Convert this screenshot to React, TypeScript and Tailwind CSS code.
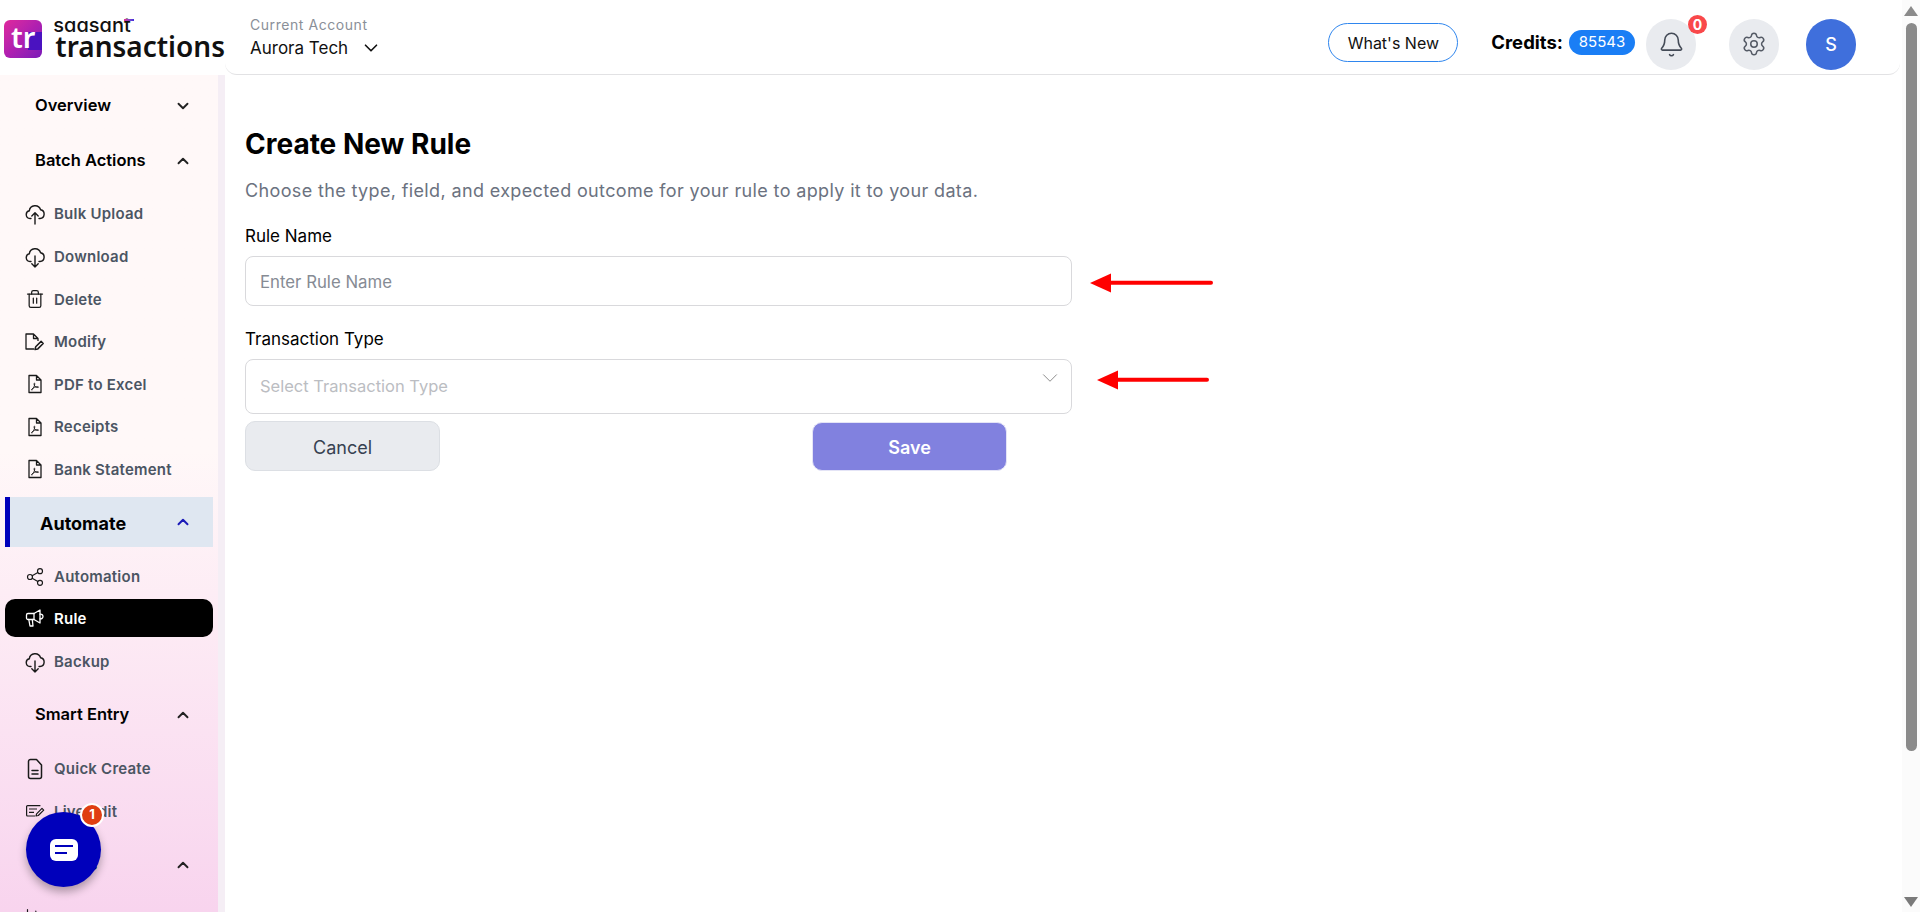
import type { ReactNode } from "react";
import { Bell, ChevronDown, ChevronUp, Settings, Share2, Trash2, ChartColumn } from "lucide-react";

const font = "font-['Inter','Liberation_Sans',sans-serif]";

const CloudUp = () => (
  <svg width="20" height="22" viewBox="0 0 20 22" fill="none" stroke="currentColor" strokeWidth="1.4" strokeLinecap="round" strokeLinejoin="round">
    <path d="M6 15.500H5a3.900 3.900 0 0 1-.7-7.700 5.800 5.800 0 0 1 11.300-1A4.400 4.400 0 0 1 15 15.500h-1" />
    <path d="M10 21V10M6.800 13 10 9.800l3.200 3.200" />
  </svg>
);

const CloudDown = () => (
  <svg width="20" height="22" viewBox="0 0 20 22" fill="none" stroke="currentColor" strokeWidth="1.4" strokeLinecap="round" strokeLinejoin="round">
    <path d="M6 15.500H5a3.900 3.900 0 0 1-.7-7.700 5.800 5.800 0 0 1 11.300-1A4.400 4.400 0 0 1 15 15.500h-1" />
    <path d="M10 10v11M6.800 17.800 10 21l3.200-3.200" />
  </svg>
);

const ModifyIcon = () => (
  <svg width="20" height="18" viewBox="0 0 20 18" fill="none" stroke="currentColor" strokeWidth="1.3" strokeLinejoin="round">
    <path d="M9 16H1V1h7.500L13 5.500V8M8.500 1v4.500H13" />
    <path d="M10 16.500l.7-2.700 5.400-5.400 2.100 2.100-5.400 5.400z" strokeWidth="1.500" />
  </svg>
);

const PdfIcon = () => (
  <svg width="20" height="20" viewBox="0 0 20 20" fill="none" stroke="currentColor" strokeWidth="1.3" strokeLinejoin="round">
    <path d="M4 1.500h7.500L16 6v12.500H4zM11.500 1.500V6H16" />
    <path
      d="M6.500 15.800c1.600-.8 3-3.200 3.300-5.900.1-1-.8-1-.8 0 .2 2.100 1.500 3.500 3.800 3.600 1 0 1-.8 0-.8-2.300 0-4.700.8-6 2.600-.4.600.1.900.7.500"
      strokeWidth="0.9"
    />
  </svg>
);

const MegaphoneIcon = () => (
  <svg width="20" height="20" viewBox="0 0 20 20" fill="none" stroke="currentColor" strokeWidth="1.3" strokeLinejoin="round" strokeLinecap="round">
    <path d="M3 5.500h6l6-3.500v13l-6-3.500H3a1.500 1.500 0 0 1-1.500-1.500V7A1.500 1.500 0 0 1 3 5.500z" />
    <path d="M3.800 11.500l1.200 6.500h3L7.300 11.500M9 5.500v6M15 6.200a2.400 2.400 0 0 1 3 2.300 2.400 2.400 0 0 1-3 2.300" />
  </svg>
);

const QuickCreateIcon = () => (
  <svg width="20" height="22" viewBox="0 0 20 22" fill="none" stroke="currentColor" strokeWidth="1.5" strokeLinejoin="round" strokeLinecap="round">
    <path d="M3.500 3.500a2 2 0 0 1 2-2h6l5 5.500v11.500a2 2 0 0 1-2 2h-9a2 2 0 0 1-2-2z" />
    <path d="M7 12.500h6M7 16h6" />
  </svg>
);

const LiveEditIcon = () => (
  <svg width="20" height="20" viewBox="0 0 20 20" fill="none" stroke="currentColor" strokeWidth="1.2">
    <path d="M10 14H2.600a1 1 0 0 1-1-1V4.600a1 1 0 0 1 1-1h12.800" />
    <path d="M4 7h8M4 10.300h5" />
    <path d="M11 14l.6-2.200 5.400-5.400 1.700 1.700-5.400 5.400z" strokeLinejoin="round" />
  </svg>
);

type Child = { name: string; icon: ReactNode; y: string };
type Section = { name: string; open: boolean; active?: boolean; after: string; children: Child[] };

const sections: Section[] = [
  { name: "Overview", open: false, after: "", children: [] },
  {
    name: "Batch Actions",
    open: true,
    after: "mt-[4px]",
    children: [
      { name: "Bulk Upload", icon: <CloudUp />, y: "h-[43px]" },
      { name: "Download", icon: <CloudDown />, y: "h-[43px]" },
      { name: "Delete", icon: <Trash2 size={20} strokeWidth={1.5} />, y: "h-[42px]" },
      { name: "Modify", icon: <ModifyIcon />, y: "h-[43px]" },
      { name: "PDF to Excel", icon: <PdfIcon />, y: "h-[42px]" },
      { name: "Receipts", icon: <PdfIcon />, y: "h-[43px]" },
      { name: "Bank Statement", icon: <PdfIcon />, y: "h-[42px]" },
    ],
  },
  {
    name: "Automate",
    open: true,
    active: true,
    after: "",
    children: [
      { name: "Automation", icon: <Share2 size={20} strokeWidth={1.4} />, y: "h-[43px]" },
      { name: "Rule", icon: <MegaphoneIcon />, y: "h-[38px] mt-px mb-[3px]" },
      { name: "Backup", icon: <CloudDown />, y: "h-[43px] mb-[4px]" },
    ],
  },
  {
    name: "Smart Entry",
    open: true,
    after: "mt-[5px]",
    children: [
      { name: "Quick Create", icon: <QuickCreateIcon />, y: "h-[43px]" },
      { name: "Live Edit", icon: <LiveEditIcon />, y: "h-[43px] mb-[4px]" },
    ],
  },
  {
    name: "Reports",
    open: true,
    after: "mt-[3px]",
    // only the top of this row's icon is in view, its label falls below the page
    children: [{ name: "", icon: <ChartColumn size={24} strokeWidth={1.4} />, y: "h-[43px]" }],
  },
];

const Sidebar = () => (
  <aside className="w-[225px] shrink-0 flex overflow-hidden bg-[#f5eef5]">
    <div className="w-[218px] h-full bg-gradient-to-b from-[#fff8f8] from-45% to-[#f8d4ee] px-[5px] pt-[3px]">
      {sections.map((section) => (
        <div key={section.name}>
          {section.active ? (
            <div className="flex items-center justify-between h-[50px] mt-[7px] mb-[8px] border-l-[5px] border-[#0000bb] bg-[#dfe7f1] pl-[30px] pr-[21px]">
              <span className="text-[18px] font-bold text-black mt-[2px]">{section.name}</span>
              <ChevronUp size={18} strokeWidth={2.6} className="text-[#1a1ab8]" />
            </div>
          ) : (
            <div className="flex items-center justify-between h-[55px] pl-[30px] pr-[21px]">
              <span className="text-[16.5px] font-semibold text-black">{section.name}</span>
              {section.open ? (
                <ChevronUp size={18} strokeWidth={2.5} className="text-[#222]" />
              ) : (
                <ChevronDown size={18} strokeWidth={2.5} className="text-[#222]" />
              )}
            </div>
          )}
          <div className={section.after}>
            {section.children.map((item) => {
              const selected = item.name === "Rule";
              return (
                <div
                  key={item.name}
                  className={`flex items-center gap-[9px] pl-[20px] ${item.y} ${
                    selected ? "bg-black rounded-[10px] text-white" : "text-[#4b5563]"
                  }`}
                >
                  <span className={`w-[20px] flex justify-center ${selected ? "text-white" : "text-[#1a1a1a]"}`}>
                    {item.icon}
                  </span>
                  <span className="text-[15px] tracking-[0.015em] font-semibold mt-[2px]">{item.name}</span>
                </div>
              );
            })}
          </div>
        </div>
      ))}
    </div>
  </aside>
);

const Header = () => (
  <header className="h-[75px] shrink-0 flex">
    <div className="w-[225px] shrink-0 flex items-center pl-[4px] pt-[2px]">
      <div className="relative w-[39px] h-[38px] rounded-[6px] overflow-hidden bg-gradient-to-br from-[#e0279c] via-[#b01fb0] to-[#7a18b8] flex items-center justify-center">
        <span className="absolute right-0 top-[12px] w-[14px] h-[18px] bg-[#4a12c0]" />
        <span className="relative text-white text-[29px] font-semibold leading-[38px] font-['Noto_Sans',sans-serif] -mt-[4px]">tr</span>
      </div>
      <div className="ml-[11px] flex flex-col -mt-[2px]">
        <span className="relative w-fit text-[20px] leading-[16px] font-medium text-[#111] [font-feature-settings:'cv11']">
          saasant
          <span className="absolute -right-[3px] top-[2px] w-[10px] h-[2px] bg-gradient-to-r from-[#e0279c] to-[#3a2be0]" />
        </span>
        <span className="text-[28px] leading-[26px] font-semibold text-[#111] font-['Noto_Sans',sans-serif] ml-[2px]">transactions</span>
      </div>
    </div>
    <div className="flex-1 flex items-center justify-between border-b border-[#e2e2e4] rounded-b-[12px] pl-[25px] pr-[44px]">
      <div>
        <div className="text-[14px] leading-[20px] text-[#8a8f98] tracking-[0.04em]">Current Account</div>
        <div className="flex items-center gap-[12px] text-[17px] leading-[24px] text-[#111] mt-px">
          Aurora Tech
          <ChevronDown size={22} strokeWidth={1.8} />
        </div>
      </div>
      <div className="flex items-center pt-[14px]">
        <button className="w-[130px] h-[39px] -mt-[3px] rounded-full border border-[#2f86ee] bg-white text-[16px] text-[#111] mr-[33px]">
          What's New
        </button>
        <span className="text-[18.500px] font-bold text-black mr-[6px] -mt-[3px]">Credits:</span>
        <span className="w-[66px] h-[25px] -mt-[3px] rounded-full bg-[#1a7ef5] text-white text-[15px] flex items-center justify-center mr-[11px]">
          85543
        </span>
        <span className="relative w-[50px] h-[51px] rounded-full bg-[#e9ebef] flex items-center justify-center text-[#444b57]">
          <Bell size={27} strokeWidth={1.4} />
          <span className="absolute -right-[11px] -top-[4px] w-[19px] h-[19px] rounded-full bg-[#f9484a] text-white text-[14px] font-bold flex items-center justify-center">
            0
          </span>
        </span>
        <span className="w-[50px] h-[51px] rounded-full bg-[#e9ebef] flex items-center justify-center text-[#555b66] ml-[33px]">
          <Settings size={26} strokeWidth={1.4} />
        </span>
        <span className="w-[50px] h-[51px] rounded-full bg-[#3f6fdc] flex items-center justify-center text-white text-[18px] font-medium ml-[27px]">
          S
        </span>
      </div>
    </div>
  </header>
);

const RedArrow = ({ width, className }: { width: number; className: string }) => (
  <svg width={width} height="20" viewBox={`0 0 ${width} 20`} className={`absolute ${className}`}>
    <path d="M0 10 21 0.500V19.500Z" fill="#ff0000" />
    <path d={`M20 9.700H${width - 2}`} stroke="#ff0000" strokeWidth="4" strokeLinecap="round" />
  </svg>
);

const Main = () => (
  <main className="flex-1 pl-[20px] pt-[50px]">
    <h1 className="text-[28px] leading-[38px] font-bold text-black">Create New Rule</h1>
    <p className="mt-[14px] text-[18px] leading-[27px] text-[#6b7280] tracking-[0.02em]">
      Choose the type, field, and expected outcome for your rule to apply it to your data.
    </p>
    <label className="block mt-[20px] text-[17px] leading-[24px] text-black">Rule Name</label>
    <div className="relative mt-[8px] w-[827px]">
      <input
        placeholder="Enter Rule Name"
        className="w-full h-[50px] rounded-[8px] border border-[#d9d9dc] bg-white pl-[14px] pt-[2px] text-[16.800px] outline-none placeholder:text-[#868b94]"
      />
      <RedArrow width={123} className="left-[845px] top-[17px]" />
    </div>
    <label className="block mt-[21px] text-[17px] leading-[24px] text-black">Transaction Type</label>
    <div className="relative mt-[8px] w-[827px]">
      <div className="h-[55px] rounded-[8px] border border-[#d9d9dc] bg-white pl-[14px] pr-[8px] flex items-start justify-between pt-[14px]">
        <span className="text-[16.500px] leading-[24px] text-[#bbbdc2]">Select Transaction Type</span>
        <ChevronDown size={26} strokeWidth={0.9} className="text-[#8a8a8a] -mt-[9px]" />
      </div>
      <RedArrow width={112} className="left-[852px] top-[11px]" />
    </div>
    <div className="flex items-start mt-[7px] gap-[373px]">
      <button className="w-[195px] h-[50px] pt-[2px] rounded-[10px] border border-[#dcdfe4] bg-[#e9ebef] text-[18px] text-[#374151]">
        Cancel
      </button>
      <button className="w-[195px] h-[49px] -ml-px mt-px pt-[2px] rounded-[10px] border border-[#e4e4f6] bg-[#8181df] text-[18px] font-semibold text-white">
        Save
      </button>
    </div>
  </main>
);

const Scrollbar = () => (
  <div className="w-[18px] shrink-0 ml-[2px] flex flex-col items-center bg-[#fbfbfb]">
    <div className="mt-[6px] w-0 h-0 border-x-[7px] border-x-transparent border-b-[10px] border-b-[#8a8a8a]" />
    <div className="mt-[7px] w-[11px] h-[728px] rounded-full bg-[#8a8a8a]" />
    <div className="mt-auto mb-[5px] w-0 h-0 border-x-[7px] border-x-transparent border-t-[10px] border-t-[#7a7a7a]" />
  </div>
);

const ChatButton = () => (
  <div className="absolute left-[26px] top-[812px] w-[75px] h-[75px] rounded-full bg-[#0000bb] shadow-[0_5px_8px_rgba(0,0,0,0.3)] flex items-center justify-center">
    <span className="w-[28px] h-[22px] rounded-[6px] bg-white flex flex-col justify-center gap-[5px] pl-[5px]">
      <span className="w-[18px] h-[2px] bg-[#0000bb]" />
      <span className="w-[12px] h-[2px] bg-[#0000bb]" />
    </span>
    <span className="absolute right-[-3px] top-[-9px] w-[24px] h-[24px] rounded-full border-2 border-white bg-[#e03e12] text-white text-[13px] font-bold flex items-center justify-center">
      1
    </span>
  </div>
);

export default function App() {
  return (
    <div className={`relative flex h-[912px] w-[1920px] overflow-hidden bg-white ${font}`}>
      <div className="flex-1 flex flex-col min-w-0">
        <Header />
        <div className="flex-1 flex min-h-0">
          <Sidebar />
          <Main />
        </div>
      </div>
      <Scrollbar />
      <ChatButton />
    </div>
  );
}
